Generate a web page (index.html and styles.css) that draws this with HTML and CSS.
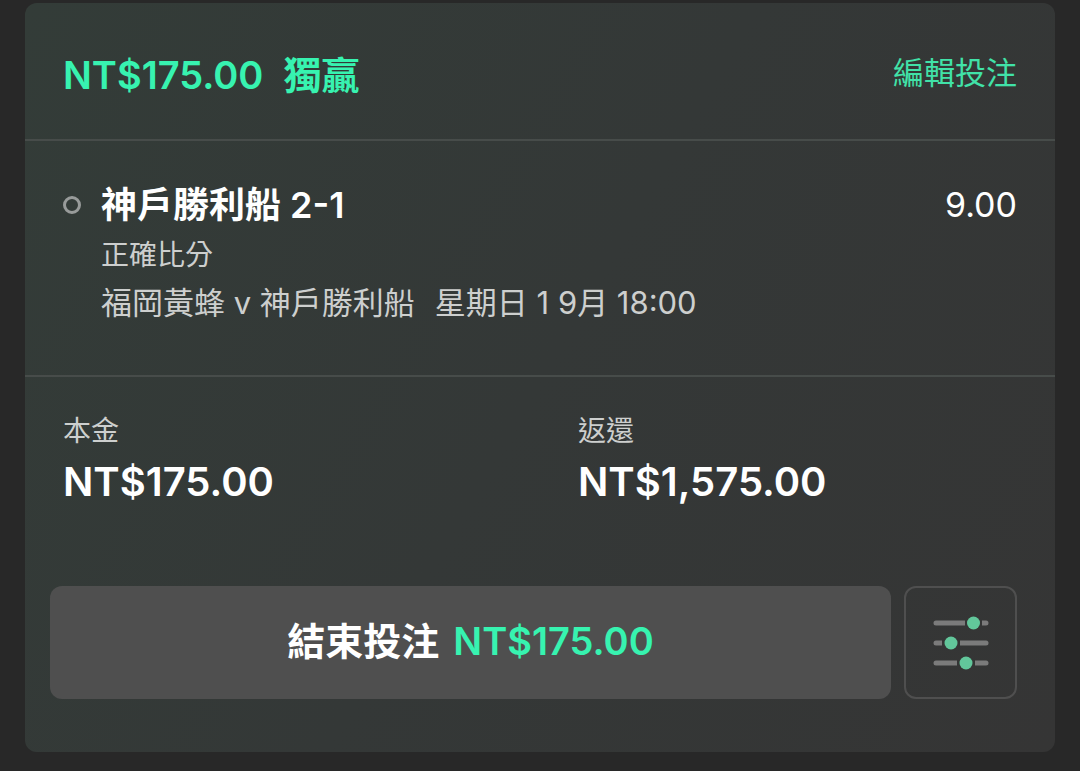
FILE: index.html
```html
<!DOCTYPE html>
<html lang="zh-Hant">
<head>
  <meta charset="UTF-8" />
  <meta name="viewport" content="width=device-width, initial-scale=1.0"/>
  <title>我的投注</title>
  <link rel="stylesheet" href="styles.css">
</head>
<body>
  <main class="bet-card">
    <header class="bet-header">
      <h1 class="bet-title"><span class="amount">NT$175.00</span><span>獨贏</span></h1>
      <a href="#" class="edit-link">編輯投注</a>
    </header>

    <section class="selection">
      <span class="marker"></span>
      <div class="details">
        <h2 class="pick">神戶勝利船 2-1</h2>
        <p class="market">正確比分</p>
        <p class="event"><span>福岡黃蜂 v 神戶勝利船</span><span>星期日 1 9月 18:00</span></p>
      </div>
      <span class="odds">9.00</span>
    </section>

    <section class="bottom">
      <dl class="totals">
        <div class="total">
          <dt>本金</dt>
          <dd>NT$175.00</dd>
        </div>
        <div class="total">
          <dt>返還</dt>
          <dd>NT$1,575.00</dd>
        </div>
      </dl>
      <div class="actions">
        <button type="button" class="cash-out"><span>結束投注</span><span class="amount">NT$175.00</span></button>
        <button type="button" class="settings" aria-label="設定">
          <svg width="56" height="56" viewBox="0 0 56 56">
            <!-- tracks -->
            <g fill="#7b7b7b">
              <path d="M3 5.500H32V10.500H3a2.500 2.500 0 0 1 0-5z"/>
              <path d="M49 5.500H53a2.500 2.500 0 0 1 0 5H49z"/>
              <path d="M3 25.500H9V30.500H3a2.500 2.500 0 0 1 0-5z"/>
              <path d="M27 25.500H53a2.500 2.500 0 0 1 0 5H27z"/>
              <path d="M3 45.500H24V50.500H3a2.500 2.500 0 0 1 0-5z"/>
              <path d="M42 45.500H53a2.500 2.500 0 0 1 0 5H42z"/>
            </g>
            <!-- knobs -->
            <g fill="#62c79b">
              <circle cx="40.500" cy="8" r="6.500"/>
              <circle cx="18" cy="28" r="6.500"/>
              <circle cx="33" cy="48" r="6.500"/>
            </g>
          </svg>
        </button>
      </div>
    </section>
  </main>
</body>
</html>
```
FILE: styles.css
```css
* {
  margin: 0;
  padding: 0;
  box-sizing: border-box;
}

body {
  font-family: Inter, "Noto Sans CJK TC", sans-serif;
  background: #282828;
  color: #fff;
  padding: 3px 25px 19px;
}

.bet-card {
  border-radius: 12px;
  background: linear-gradient(120deg, #333c38, #343837 50%, #353535);
}

.bet-header {
  display: flex;
  justify-content: space-between;
  align-items: center;
  padding: 44px 38px 40px;
  border-bottom: 2px solid #474c4a;
}

.bet-title {
  display: flex;
  gap: 20px;
  padding-top: 4px;
  font-size: 38px;
  line-height: 48px;
  font-weight: 600;
  color: #37f3b0;
}

.amount {
  color: #37f3b0;
}

.edit-link {
  font-size: 31px;
  line-height: 48px;
  color: #41e2a8;
  text-decoration: none;
}

.selection {
  display: flex;
  padding: 40px 38px 48px;
  border-bottom: 2px solid #474c4a;
}

.marker {
  width: 18px;
  height: 18px;
  margin: 15px 20px 0 0;
  border: 3px solid #989b9a;
  border-radius: 50%;
}

.details {
  flex: 1;
}

.pick {
  font-size: 36px;
  line-height: 48px;
  font-weight: 600;
}

.market {
  margin-top: 2px;
  font-size: 28px;
  line-height: 48px;
  color: #cdcfce;
}

.event {
  display: flex;
  gap: 20px;
  font-size: 31px;
  line-height: 48px;
  color: #cdcfce;
}

.odds {
  font-size: 34px;
  line-height: 48px;
}

.bottom {
  padding: 30px 38px 53px 25px;
}

.totals {
  display: grid;
  grid-template-columns: 1fr 1fr;
  margin: 0 -38px 0 -25px;
}

.total {
  padding-left: 38px;
}

.total dt {
  font-size: 28px;
  line-height: 48px;
  color: #cdcfce;
}

.total dd {
  font-size: 40px;
  line-height: 54px;
  font-weight: 600;
}

.actions {
  display: flex;
  gap: 13px;
  margin-top: 77px;
}

.cash-out {
  display: flex;
  flex: 1;
  align-items: center;
  justify-content: center;
  gap: 14px;
  padding-bottom: 4px;
  border: none;
  border-radius: 12px;
  background: #4f4f4f;
  color: #fff;
  font-family: inherit;
  font-size: 38px;
  line-height: 48px;
  font-weight: 600;
}

.settings {
  display: flex;
  align-items: center;
  justify-content: center;
  width: 113px;
  height: 113px;
  border: 2px solid #4f4f4f;
  border-radius: 12px;
  background: none;
}
```
